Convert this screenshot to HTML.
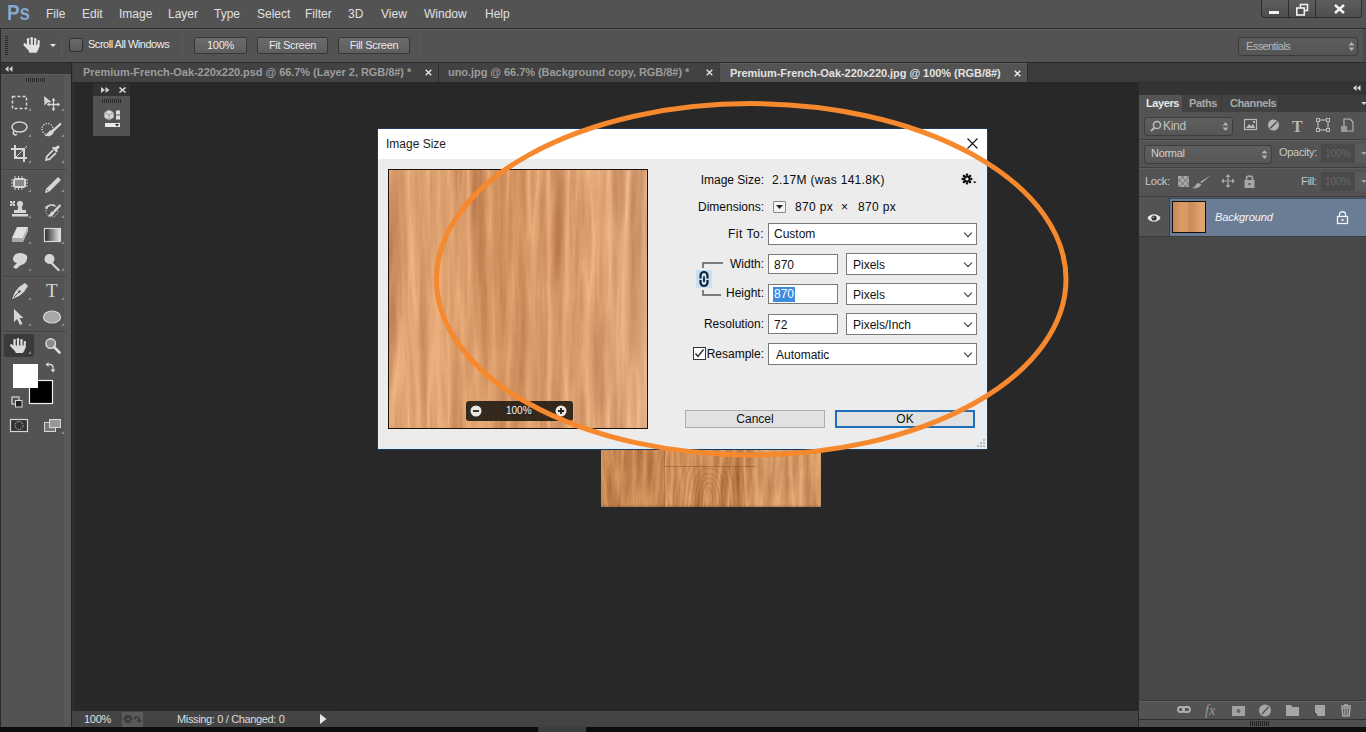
<!DOCTYPE html>
<html><head><meta charset="utf-8">
<style>
*{margin:0;padding:0;box-sizing:border-box}
html,body{width:1366px;height:732px;overflow:hidden;background:#282828;font-family:"Liberation Sans",sans-serif;}
.a{position:absolute}
svg{position:absolute;overflow:visible}
#menubar{left:0;top:0;width:1366px;height:28px;background:#535353;}
.mi{position:absolute;top:7px;font-size:12px;color:#e0e0e0;}
#mline{left:0;top:28px;width:1366px;height:1px;background:#2a2a2a}
#opts{left:0;top:29px;width:1366px;height:33px;background:#535353;}
.btn{position:absolute;top:8px;height:17px;border:1px solid #363636;border-radius:2px;background:linear-gradient(#6b6b6b,#5d5d5d);color:#e8e8e8;font-size:11px;text-align:center;line-height:15px;letter-spacing:-0.3px}
.sep{position:absolute;width:1px;background:#454545;border-right:1px solid #5c5c5c}
#tabbar{left:72px;top:62px;width:1294px;height:20px;background:#3c3c3c;border-top:1px solid #2a2a2a}
.tab{position:absolute;top:0;height:19px;font-size:11px;font-weight:bold;color:#9c9c9c;padding-left:10px;line-height:18px;white-space:nowrap;letter-spacing:-0.05px}
.tab .x{position:absolute;top:0;font-weight:normal;font-size:12px;color:#cfcfcf}
#lefttb{left:0;top:62px;width:72px;height:665px;background:linear-gradient(90deg,#535353 64px,#585858 64px 71px,#232323 71px);}
#lefthdr{left:0;top:62px;width:71px;height:13px;background:#363636;border-top:1px solid #2a2a2a;border-bottom:1px solid #5c5c5c}
#canvas{left:72px;top:82px;width:1067px;height:629px;background:#282828;}
#status{left:72px;top:711px;width:1067px;height:16px;background:#444444;}
#bottom{left:0;top:727px;width:1366px;height:5px;background:#0c0c0c}
#rightp{left:1138px;top:81px;width:228px;height:646px;background:#484848;border-left:1px solid #2a2a2a}
#dlg{left:377px;top:128px;width:611px;height:322px;background:#ececec;border:1px solid #1f3a58;}
#dtitle{left:0;top:0;width:609px;height:30px;background:#fff;}
.lbl{position:absolute;font-size:12px;color:#0a0a0a;white-space:nowrap}
.inp{position:absolute;background:#fff;border:1px solid #7a7a7a;font-size:12px;color:#111;padding-left:5px}
.dd{position:absolute;background:#fff;border:1px solid #7a7a7a;font-size:12px;color:#111;padding-left:6px}
.dd:after{content:"";position:absolute;right:5px;top:6px;width:5px;height:5px;border-right:1.2px solid #333;border-bottom:1.2px solid #333;transform:rotate(45deg)}
.ti{position:absolute}
.wood1{background:linear-gradient(90deg,rgba(245,185,135,0) 0.0px, rgba(245,185,135,0.48) 2.6px, rgba(245,185,135,0) 5.2px,rgba(245,185,135,0) 5.2px, rgba(245,185,135,0.38) 7.8px, rgba(245,185,135,0) 10.4px,rgba(245,185,135,0) 10.4px, rgba(245,185,135,0.39) 12.1px, rgba(245,185,135,0) 13.7px,rgba(150,90,45,0) 13.7px, rgba(150,90,45,0.36) 17.5px, rgba(150,90,45,0) 21.3px,rgba(150,90,45,0) 23.9px, rgba(150,90,45,0.59) 27.3px, rgba(150,90,45,0) 30.8px,rgba(150,90,45,0) 39.5px, rgba(150,90,45,0.26) 42.7px, rgba(150,90,45,0) 45.8px,rgba(150,90,45,0) 45.8px, rgba(150,90,45,0.32) 48.7px, rgba(150,90,45,0) 51.5px,rgba(150,90,45,0) 51.5px, rgba(150,90,45,0.41) 53.4px, rgba(150,90,45,0) 55.2px,rgba(150,90,45,0) 71.4px, rgba(150,90,45,0.60) 74.0px, rgba(150,90,45,0) 76.6px,rgba(245,185,135,0) 85.6px, rgba(245,185,135,0.27) 89.1px, rgba(245,185,135,0) 92.6px,rgba(150,90,45,0) 92.6px, rgba(150,90,45,0.52) 94.6px, rgba(150,90,45,0) 96.6px,rgba(150,90,45,0) 106.1px, rgba(150,90,45,0.32) 110.1px, rgba(150,90,45,0) 114.0px,rgba(245,185,135,0) 114.0px, rgba(245,185,135,0.49) 118.2px, rgba(245,185,135,0) 122.4px,rgba(150,90,45,0) 122.4px, rgba(150,90,45,0.47) 124.8px, rgba(150,90,45,0) 127.2px,rgba(150,90,45,0) 127.2px, rgba(150,90,45,0.28) 130.9px, rgba(150,90,45,0) 134.6px,rgba(150,90,45,0) 138.9px, rgba(150,90,45,0.34) 142.6px, rgba(150,90,45,0) 146.3px,rgba(150,90,45,0) 146.3px, rgba(150,90,45,0.53) 147.6px, rgba(150,90,45,0) 149.0px,rgba(245,185,135,0) 149.0px, rgba(245,185,135,0.33) 150.6px, rgba(245,185,135,0) 152.2px,rgba(245,185,135,0) 158.5px, rgba(245,185,135,0.26) 159.9px, rgba(245,185,135,0) 161.3px,rgba(245,185,135,0) 165.2px, rgba(245,185,135,0.47) 169.0px, rgba(245,185,135,0) 172.8px,rgba(245,185,135,0) 172.8px, rgba(245,185,135,0.46) 174.5px, rgba(245,185,135,0) 176.3px,rgba(150,90,45,0) 176.3px, rgba(150,90,45,0.60) 179.5px, rgba(150,90,45,0) 182.8px,rgba(150,90,45,0) 182.8px, rgba(150,90,45,0.52) 184.5px, rgba(150,90,45,0) 186.2px,rgba(150,90,45,0) 186.2px, rgba(150,90,45,0.28) 188.4px, rgba(150,90,45,0) 190.5px,rgba(245,185,135,0) 190.5px, rgba(245,185,135,0.27) 191.9px, rgba(245,185,135,0) 193.2px,rgba(245,185,135,0) 193.2px, rgba(245,185,135,0.34) 196.3px, rgba(245,185,135,0) 199.4px,rgba(245,185,135,0) 199.4px, rgba(245,185,135,0.37) 203.7px, rgba(245,185,135,0) 208.1px,rgba(150,90,45,0) 208.1px, rgba(150,90,45,0.30) 212.1px, rgba(150,90,45,0) 216.2px,rgba(150,90,45,0) 224.5px, rgba(150,90,45,0.51) 226.4px, rgba(150,90,45,0) 228.3px,rgba(150,90,45,0) 228.3px, rgba(150,90,45,0.58) 232.6px, rgba(150,90,45,0) 236.9px,rgba(150,90,45,0) 245.0px, rgba(150,90,45,0.26) 247.5px, rgba(150,90,45,0) 250.0px,rgba(150,90,45,0) 250.0px, rgba(150,90,45,0.50) 254.4px, rgba(150,90,45,0) 258.7px),linear-gradient(90deg, rgba(170,105,55,0) 0px, rgba(160,100,50,0.25) 15px, rgba(170,105,55,0) 30px, rgba(170,105,55,0) 60px, rgba(170,105,55,0.15) 110px, rgba(150,95,50,0.3) 150px, rgba(170,105,55,0.1) 180px, rgba(250,190,140,0.15) 220px, rgba(250,190,140,0.3) 255px),linear-gradient(180deg,#d69860,#dc9f68 50%,#e0a36c);}
.wood2{background:linear-gradient(90deg,rgba(150,90,50,0.3) 0,rgba(150,90,50,0) 8px,rgba(150,90,50,0) 14px,rgba(150,90,50,0.25) 17px,rgba(250,200,150,0.2) 28px),#d99a63;}
.w3a{background:linear-gradient(90deg,rgba(235,170,115,0) 3.2px, rgba(235,170,115,0.26) 6.4px, rgba(235,170,115,0) 9.6px,rgba(235,170,115,0) 17.1px, rgba(235,170,115,0.27) 19.9px, rgba(235,170,115,0) 22.7px,rgba(235,170,115,0) 22.7px, rgba(235,170,115,0.38) 23.7px, rgba(235,170,115,0) 24.8px,rgba(120,70,35,0) 27.2px, rgba(120,70,35,0.26) 29.1px, rgba(120,70,35,0) 30.9px,rgba(235,170,115,0) 48.0px, rgba(235,170,115,0.35) 49.1px, rgba(235,170,115,0) 50.2px,rgba(120,70,35,0) 53.0px, rgba(120,70,35,0.54) 55.3px, rgba(120,70,35,0) 57.6px,rgba(235,170,115,0) 60.5px, rgba(235,170,115,0.30) 63.1px, rgba(235,170,115,0) 65.7px),#c2824f} .w3b{background:linear-gradient(90deg,rgba(140,85,45,0) 0.0px, rgba(140,85,45,0.26) 4.4px, rgba(140,85,45,0) 8.7px,rgba(140,85,45,0) 8.7px, rgba(140,85,45,0.29) 13.2px, rgba(140,85,45,0) 17.7px,rgba(245,190,140,0) 17.7px, rgba(245,190,140,0.47) 21.0px, rgba(245,190,140,0) 24.3px,rgba(245,190,140,0) 51.4px, rgba(245,190,140,0.26) 54.5px, rgba(245,190,140,0) 57.6px,rgba(245,190,140,0) 57.6px, rgba(245,190,140,0.48) 61.5px, rgba(245,190,140,0) 65.5px,rgba(140,85,45,0) 78.9px, rgba(140,85,45,0.58) 82.0px, rgba(140,85,45,0) 85.2px),#d49660} .w3c{background:linear-gradient(90deg,rgba(140,85,45,0) 8.5px, rgba(140,85,45,0.46) 12.6px, rgba(140,85,45,0) 16.7px,rgba(250,200,150,0) 16.7px, rgba(250,200,150,0.24) 19.2px, rgba(250,200,150,0) 21.7px,rgba(250,200,150,0) 21.7px, rgba(250,200,150,0.27) 23.4px, rgba(250,200,150,0) 25.0px,rgba(140,85,45,0) 25.0px, rgba(140,85,45,0.28) 27.6px, rgba(140,85,45,0) 30.2px,rgba(250,200,150,0) 30.2px, rgba(250,200,150,0.35) 33.7px, rgba(250,200,150,0) 37.2px,rgba(250,200,150,0) 37.2px, rgba(250,200,150,0.22) 40.8px, rgba(250,200,150,0) 44.3px,rgba(250,200,150,0) 44.3px, rgba(250,200,150,0.40) 48.1px, rgba(250,200,150,0) 51.8px,rgba(250,200,150,0) 62.7px, rgba(250,200,150,0.40) 65.0px, rgba(250,200,150,0) 67.3px),#dba06c}

</style></head><body>
<div id="menubar" class="a">
  <div class="a" style="left:7px;top:0px;font-size:22px;font-weight:bold;color:#86a8cc;transform:scaleX(0.86);transform-origin:0 0;line-height:25px">Ps</div>
  <span class="mi" style="left:46px">File</span>
  <span class="mi" style="left:82px">Edit</span>
  <span class="mi" style="left:119px">Image</span>
  <span class="mi" style="left:168px">Layer</span>
  <span class="mi" style="left:214px">Type</span>
  <span class="mi" style="left:257px">Select</span>
  <span class="mi" style="left:305px">Filter</span>
  <span class="mi" style="left:348px">3D</span>
  <span class="mi" style="left:381px">View</span>
  <span class="mi" style="left:424px">Window</span>
  <span class="mi" style="left:485px">Help</span>
  <!-- window controls -->
  <div class="a" style="left:1261px;top:-1px;width:101px;height:19px;border:1px solid #2e2e2e;border-top:none;border-radius:0 0 4px 4px;background:linear-gradient(#5e5e5e,#4e4e4e)"></div>
  <div class="a" style="left:1288px;top:0;width:1px;height:18px;background:#2e2e2e"></div>
  <div class="a" style="left:1315px;top:0;width:1px;height:18px;background:#2e2e2e"></div>
  <div class="a" style="left:1269px;top:11px;width:10px;height:3px;background:#f2f2f2"></div>
  <svg style="left:1296px;top:4px" width="13" height="12"><rect x="4.5" y="0.5" width="7" height="6" fill="none" stroke="#f2f2f2" stroke-width="1.6"/><rect x="0.8" y="4" width="7.5" height="7" fill="#4f4f4f" stroke="#f2f2f2" stroke-width="1.6"/></svg>
  <svg style="left:1334px;top:4px" width="11" height="10"><path d="M1 1L10 9M10 1L1 9" stroke="#f4f4f4" stroke-width="2.4"/></svg>
</div>
<div id="mline" class="a"></div>
<div id="opts" class="a">
  <div class="a" style="left:0;top:0;width:1366px;height:1px;background:#5d5d5d"></div>
  <!-- grip -->
  <div class="a" style="left:5px;top:7px;width:3px;height:19px;background:repeating-linear-gradient(#2d2d2d 0 1px,transparent 1px 2px)"></div>
  <!-- hand -->
  <svg style="left:23px;top:7px" width="18" height="18" viewBox="0 0 18 18"><g stroke="#e2e2e2" stroke-linecap="round" fill="none"><path d="M1.8 8.5L5.5 12.5" stroke-width="2.6"/><path d="M5.2 3.2V10" stroke-width="2.5"/><path d="M8.7 2.2V10" stroke-width="2.5"/><path d="M12.2 3.2V10" stroke-width="2.5"/><path d="M15.6 5.3L15 11" stroke-width="2.5"/></g><path d="M4 9H16.6L15.2 14L13.5 16.8H6.5L4.8 13Z" fill="#e2e2e2"/><path d="M6.9 3.5V8M10.4 3.5V8M13.9 5V8.5" stroke="#3a3a3a" stroke-width="0.7"/></svg>
  <div class="a" style="left:50px;top:15px;width:0;height:0;border-left:3px solid transparent;border-right:3px solid transparent;border-top:3px solid #e8e8e8"></div>
  <div class="sep" style="left:61px;top:7px;height:20px"></div>
  <div class="a" style="left:69px;top:9px;width:14px;height:14px;border:1px solid #2f2f2f;border-radius:2px;background:linear-gradient(#6a6a6a,#5a5a5a)"></div>
  <div class="a" style="left:88px;top:9px;font-size:11px;color:#ececec;letter-spacing:-0.48px">Scroll All Windows</div>
  <div class="sep" style="left:182px;top:5px;height:24px"></div>
  <div class="btn" style="left:194px;width:53px">100%</div>
  <div class="btn" style="left:257px;width:71px">Fit Screen</div>
  <div class="btn" style="left:338px;width:72px">Fill Screen</div>
  <div class="sep" style="left:420px;top:5px;height:24px"></div>
  <!-- essentials -->
  <div class="a" style="left:1238px;top:8px;width:120px;height:19px;border:1px solid #3b3b3b;border-radius:3px;background:linear-gradient(#5c5c5c,#555)"></div>
  <div class="a" style="left:1246px;top:11px;font-size:11px;color:#b9b9b9;letter-spacing:-0.6px">Essentials</div>
  <svg style="left:1348px;top:12px" width="7" height="11"><path d="M0.5 4.5L3.5 1L6.5 4.5ZM0.5 6.5L3.5 10L6.5 6.5Z" fill="#b0b0b0"/></svg>
  <div class="a" style="left:1363px;top:0;width:3px;height:33px;background:#4a4a4a"></div>
</div>
<div id="tabbar" class="a">
  <div class="tab" style="left:1px;width:365px;background:#424242;padding-left:10px">Premium-French-Oak-220x220.psd @ 66.7% (Layer 2, RGB/8#) *<svg style="left:351.5px;top:6px" width="7" height="7"><path d="M0.7 0.7L6.3 6.3M6.3 0.7L0.7 6.3" stroke="#e6e6e6" stroke-width="1.35"/></svg></div>
  <div class="a" style="left:366px;top:1px;width:1px;height:18px;background:#2e2e2e"></div>
  <div class="tab" style="left:367px;width:280px;background:#424242;padding-left:9px">uno.jpg @ 66.7% (Background copy, RGB/8#) *<svg style="left:266.5px;top:6px" width="7" height="7"><path d="M0.7 0.7L6.3 6.3M6.3 0.7L0.7 6.3" stroke="#e6e6e6" stroke-width="1.35"/></svg></div>
  <div class="tab" style="left:648px;width:307px;background:#535353;color:#e2e2e2;padding-left:10px;border-top:1px solid #5e5e5e">Premium-French-Oak-220x220.jpg @ 100% (RGB/8#)<svg style="left:293.5px;top:6px" width="7" height="7"><path d="M0.7 0.7L6.3 6.3M6.3 0.7L0.7 6.3" stroke="#eeeeee" stroke-width="1.35"/></svg></div>
  <div class="a" style="left:955px;top:1px;width:1px;height:18px;background:#2e2e2e"></div>
</div>
</div>
<div id="canvas" class="a"></div>
<div class="a" style="left:72px;top:82px;width:2px;height:629px;background:#2f2f2f"></div>
<div id="status" class="a"></div>
<div id="bottom" class="a"></div>
<div class="a" style="left:84px;top:713px;font-size:11px;color:#e0e0e0;letter-spacing:-0.3px">100%</div>
<div class="a" style="left:122px;top:712px;width:21px;height:15px;background:#5a5a5a"></div>
<svg style="left:123px;top:714px" width="20" height="11"><circle cx="5" cy="5" r="2.4" fill="none" stroke="#3a3a3a" stroke-width="1.8"/><rect x="7.70" y="4.10" width="1.8" height="1.8" fill="#3a3a3a"/><rect x="6.65" y="6.65" width="1.8" height="1.8" fill="#3a3a3a"/><rect x="4.10" y="7.70" width="1.8" height="1.8" fill="#3a3a3a"/><rect x="1.55" y="6.65" width="1.8" height="1.8" fill="#3a3a3a"/><rect x="0.50" y="4.10" width="1.8" height="1.8" fill="#3a3a3a"/><rect x="1.55" y="1.55" width="1.8" height="1.8" fill="#3a3a3a"/><rect x="4.10" y="0.50" width="1.8" height="1.8" fill="#3a3a3a"/><rect x="6.65" y="1.55" width="1.8" height="1.8" fill="#3a3a3a"/><path d="M11 4.5C12 2.5 15 2.5 16 4.5V7M14 6L16 8L18 6" fill="none" stroke="#3a3a3a" stroke-width="1.5"/><path d="M10.5 4L12.5 2V6Z" fill="#3a3a3a"/></svg>
<div class="a" style="left:177px;top:713px;font-size:11px;color:#dcdcdc;letter-spacing:-0.35px">Missing: 0 / Changed: 0</div>
<svg style="left:320px;top:714px" width="7" height="10"><path d="M0 0L6.5 5L0 10Z" fill="#e8e8e8"/></svg>
<div class="a" style="left:330px;top:711px;width:809px;height:16px;background:linear-gradient(#464646,#424242)"></div>
<div class="a" style="left:538px;top:727px;width:48px;height:5px;background:#3a3d40"></div>


<div id="lefttb" class="a"></div>
<div id="lefthdr" class="a"></div>
<div class="a" style="left:0;top:29px;width:1px;height:698px;background:#2a2a2a"></div>
<svg style="left:5px;top:66px" width="8" height="6"><path d="M0 3L3.5 0V6ZM4 3L7.5 0V6Z" fill="#cfcfcf"/></svg>
<div class="a" style="left:26px;top:78px;width:20px;height:4px;background:repeating-linear-gradient(90deg,#2a2a2a 0 1px,transparent 1px 2px)"></div>
<div class="a" style="left:3px;top:169px;width:63px;height:1px;background:#434343"></div><div class="a" style="left:3px;top:170px;width:63px;height:1px;background:#5a5a5a"></div>
<div class="a" style="left:3px;top:276px;width:63px;height:1px;background:#434343"></div><div class="a" style="left:3px;top:277px;width:63px;height:1px;background:#5a5a5a"></div>
<div class="a" style="left:3px;top:331px;width:63px;height:1px;background:#434343"></div><div class="a" style="left:3px;top:332px;width:63px;height:1px;background:#5a5a5a"></div>
<div class="a" style="left:4px;top:334px;width:30px;height:23px;background:#3a3a3a;border-radius:2px"></div>
<svg style="left:0;top:0" width="72" height="440" viewBox="0 0 72 440">
 <g fill="none" stroke="#d6d6d6" stroke-width="1.5">
  <!-- marquee -->
  <rect x="12.5" y="96.5" width="14" height="12" stroke-dasharray="3 2"/>
  <!-- lasso -->
  <ellipse cx="19.5" cy="127" rx="7.5" ry="5"/>
  <path d="M14 131 C12 134 15 136 17 134"/>
  <!-- crop -->
  <path d="M15 145V158H27M11 149H24V162" stroke-width="2"/>
  <path d="M15 158L27 146" stroke-width="1"/>
  <!-- quick selection dotted circle -->
  <circle cx="47.5" cy="129" r="5.5" stroke-dasharray="1.2 1.4"/>
  <!-- history brush arc -->
  <path d="M46 209 C47 205 52 204 55 206" stroke-width="1.6"/>
  <circle cx="52" cy="211" r="6" stroke-dasharray="1.2 1.4" stroke-width="1"/>
  <!-- pen -->
  <!-- ellipse tool -->
 </g>
 <g fill="#d6d6d6">
  <!-- move tool -->
  <path d="M44 96L44.5 105.5L47.5 102.5L51.5 102Z"/>
  <path d="M47.5 104.5H59.5M53.5 98.5V110.5" stroke="#d6d6d6" stroke-width="1.3"/>
  <path d="M47 104.5L49.5 102.5V106.5ZM60 104.5L57.5 102.5V106.5ZM53.5 98L51.5 100.5H55.5ZM53.5 111L51.5 108.5H55.5Z"/>
  <!-- quick selection brush -->
  <path d="M60.5 122.5L52.5 129.5C51 131 52 133 53.5 132L61.5 124.5Z"/>
  <path d="M51 130C48 131 47.5 134.5 44.5 135.5C48.5 137.5 53.5 135.5 53.5 132Z"/>
  <!-- eyedropper -->
  <path d="M57 146C58.5 144.5 60.5 146.5 59 148L57 150L58 151L56.5 152.5L52 148L53.5 146.5L54.5 147.5Z"/>
  <path d="M52.5 149.5L46 156L45 161L50 160L56.5 153.5L55.3 152.3L49.3 158.3L47.3 158.7L47.7 156.7L53.7 150.7Z"/>
  <!-- spot healing -->
  <rect x="13" y="178" width="13" height="10" rx="3"/>
  <path d="M11 180H28M11 183H28M11 186H28M15 176V190M18.5 176V190M22 176V190" stroke="#d6d6d6" stroke-width="0.9"/>
  <rect x="15" y="180" width="9" height="6" fill="#8a8a8a"/>
  <!-- brush/pencil -->
  <path d="M58 177L61 180L49 192L45 193L46 189Z"/>
  <path d="M47 190L48.5 191.5" stroke="#535353"/>
  <!-- stamp -->
  <circle cx="20" cy="204" r="3"/>
  <path d="M18.5 206H21.5L22.5 210H26V213H14V210H17.5Z"/>
  <rect x="12" y="214" width="16" height="2.5"/>
  <path d="M10 201h2v2h-2zM13 201h2v2h-2zM11.5 202.5h2v2h-2zM10 204h2v2h-2zM13 204h2v2h-2z"/>
  <!-- history brush -->
  <path d="M60 204L54 210C52.5 211.5 53.5 213.5 55 212.5L61 206Z"/>
  <path d="M52 211C50 213 50 215.5 47 216 C50 217 54 216 54.5 213Z"/>
  <path d="M45 207L48 205.5L47.5 209Z"/>
  <!-- eraser -->
  <path d="M17 227H28L23 238H12Z" fill="#e0e0e0"/>
  <path d="M12 238H23L23 242H12Z" fill="#a8a8a8"/>
  <path d="M23 238L28 227L28 231L23 242Z" fill="#bdbdbd"/>
  <!-- smudge finger -->
  <path d="M14 256C16 252 24 252 27 256C28 260 25 265 21 265L16 269L13 267L17 263C13 262 12 259 14 256Z"/>
  <!-- dodge -->
  <circle cx="49.5" cy="259" r="5"/>
  <path d="M52 262L60 270L58.5 271.5L50.5 263.5Z"/>
  <!-- pen -->
  <path d="M25 283L28 286L24 292L19 296L12 299L15 292L19 287Z"/>
  <path d="M14 297L19 292" stroke="#535353" stroke-width="1"/>
  <circle cx="19.5" cy="291.5" r="1.2" fill="#535353"/>
  <!-- type T -->
  <text x="46" y="297" font-family="Liberation Serif" font-size="19" fill="#d6d6d6">T</text>
  <!-- path selection -->
  <path d="M14 309V322L17 319L20 325L22.5 324L19.5 318L23.5 318Z"/>
  <!-- ellipse tool -->
  <ellipse cx="52" cy="317" rx="8.5" ry="6" fill="#a8a8a8" stroke="#d6d6d6" stroke-width="1.2"/>
  <!-- hand tool -->
  <g transform="translate(9.5,337) scale(0.98)"><g stroke="#dcdcdc" stroke-linecap="round" fill="none"><path d="M1.8 8.5L5.5 12.5" stroke-width="2.6"/><path d="M5.2 3.2V10" stroke-width="2.5"/><path d="M8.7 2.2V10" stroke-width="2.5"/><path d="M12.2 3.2V10" stroke-width="2.5"/><path d="M15.6 5.3L15 11" stroke-width="2.5"/></g><path d="M4 9H16.6L15.2 14L13.5 16.3H6.5L4.8 13Z" fill="#dcdcdc"/><path d="M6.9 3.5V8M10.4 3.5V8M13.9 5V8.5" stroke="#333" stroke-width="0.7"/></g>
  <!-- zoom -->
  <circle cx="50.7" cy="343.6" r="4.8" fill="#8c8c8c" stroke="#dedede" stroke-width="1.4"/>
  <path d="M54 347L59.5 352.5" stroke="#dedede" stroke-width="2.6" stroke-linecap="round"/>
  <!-- swap arrow -->
  <path d="M48 364.5H50C52.5 364.5 53 366 53 368V370" stroke="#d6d6d6" stroke-width="1.3" fill="none"/>
  <path d="M45.5 364.5L48.5 362V367Z"/>
  <path d="M50.5 369.5H55.5L53 372.5Z"/>
  <!-- default colors -->
  <rect x="12" y="397" width="7" height="7" fill="none" stroke="#d6d6d6" stroke-width="1.2"/>
  <rect x="15.5" y="400.5" width="6.5" height="6.5" fill="#222" stroke="#d6d6d6" stroke-width="1"/>
  <!-- quick mask -->
  <rect x="10.5" y="419.5" width="17" height="12" fill="#333" stroke="#d6d6d6" stroke-width="1.2"/>
  <circle cx="19" cy="425.5" r="4" fill="none" stroke="#d6d6d6" stroke-width="1" stroke-dasharray="1 1"/>
  <!-- screen mode -->
  <rect x="44.5" y="422.5" width="11" height="9" fill="#777" stroke="#d6d6d6" stroke-width="1"/>
  <rect x="49.5" y="419.5" width="11" height="8" fill="#999" stroke="#d6d6d6" stroke-width="1"/>
 </g>
 <g fill="#8c8c8c">
  <path d="M28 111h3v-3zM61 111h3v-3zM28 137h3v-3zM61 137h3v-3zM28 163h3v-3zM61 163h3v-3zM28 192h3v-3zM61 192h3v-3zM28 218h3v-3zM61 218h3v-3zM28 244h3v-3zM61 244h3v-3zM28 271h3v-3zM61 271h3v-3zM28 300h3v-3zM61 300h3v-3zM28 326h3v-3zM61 326h3v-3zM28 354h3v-3zM61 434h3v-3z"/>
 </g>
 <!-- gradient tool -->
 <defs><linearGradient id="gg" x1="0" x2="1"><stop offset="0" stop-color="#222"/><stop offset="1" stop-color="#eee"/></linearGradient></defs>
 <rect x="44.5" y="228.5" width="16" height="13" fill="url(#gg)" stroke="#d6d6d6" stroke-width="1.2"/>
 <!-- swatches -->
 <rect x="29.5" y="380.5" width="23" height="23" fill="#000" stroke="#f0f0f0" stroke-width="1.2"/>
 <rect x="13" y="364" width="25" height="24" fill="#fff"/>
</svg>
<!-- floating panel -->
<div class="a" style="left:93px;top:83px;width:37px;height:13px;background:#323232"></div>
<div class="a" style="left:93px;top:96px;width:37px;height:40px;background:#535353"></div>
<svg style="left:101px;top:87px" width="9" height="6"><path d="M0 0L4 3L0 6ZM4.5 0L8.5 3L4.5 6Z" fill="#d0d0d0"/></svg>
<svg style="left:119px;top:87px" width="7" height="6"><path d="M0.5 0.5L6.5 5.5M6.5 0.5L0.5 5.5" stroke="#e0e0e0" stroke-width="1.6"/></svg>
<div class="a" style="left:102px;top:99px;width:19px;height:4px;background:repeating-linear-gradient(90deg,#2a2a2a 0 1px,transparent 1px 2px)"></div>
<svg style="left:104px;top:109px" width="18" height="20"><path d="M5 1L9.5 3.5V8.5L5 11L0.5 8.5V3.5Z" fill="#d8d8d8" stroke="#aaa" stroke-width="0.6"/><path d="M5 6V11M0.5 3.5L5 6L9.5 3.5" stroke="#888" stroke-width="0.8" fill="none"/><rect x="12" y="1.5" width="4" height="4" fill="#e0e0e0"/><rect x="12" y="6.5" width="4" height="4" fill="#e0e0e0"/><rect x="1" y="14" width="15" height="4" fill="#e8e8e8"/><path d="M11 15H15L13 17.5Z" fill="#222"/></svg>


<div id="rightp" class="a"></div>
<div class="a" style="left:1139px;top:81px;width:227px;height:14px;background:#343434"></div>
<svg style="left:1353px;top:85px" width="8" height="6"><path d="M3.5 0V6L0 3ZM7.5 0V6L4 3Z" fill="#d8d8d8"/></svg>
<div class="a" style="left:1139px;top:95px;width:227px;height:17px;background:#3d3d3d"></div>
<div class="a" style="left:1139px;top:95px;width:43px;height:17px;background:#535353;font-size:11px;font-weight:bold;color:#e8e8e8;padding-left:7px;line-height:17px;letter-spacing:-0.4px">Layers</div>
<div class="a" style="left:1182px;top:95px;width:40px;height:17px;background:#424242;border-right:1px solid #363636;font-size:11px;font-weight:bold;color:#a9a9a9;padding-left:7px;line-height:17px;letter-spacing:-0.4px">Paths</div>
<div class="a" style="left:1222px;top:95px;width:57px;height:17px;background:#424242;border-right:1px solid #363636;font-size:11px;font-weight:bold;color:#a9a9a9;padding-left:8px;line-height:17px;letter-spacing:-0.4px">Channels</div>
<svg style="left:1361px;top:102px" width="6" height="4"><path d="M0 0H6L3 3Z" fill="#d0d0d0"/></svg>
<div class="a" style="left:1139px;top:112px;width:227px;height:85px;background:#535353"></div>
<div class="a" style="left:1139px;top:139px;width:227px;height:1px;background:#3f3f3f"></div>
<div class="a" style="left:1139px;top:140px;width:227px;height:1px;background:#5e5e5e"></div>
<div class="a" style="left:1139px;top:167px;width:227px;height:1px;background:#3f3f3f"></div>
<div class="a" style="left:1139px;top:168px;width:227px;height:1px;background:#5e5e5e"></div>
<div class="a" style="left:1139px;top:196px;width:227px;height:1px;background:#3f3f3f"></div>
<!-- kind -->
<div class="a" style="left:1144px;top:117px;width:89px;height:19px;border:1px solid #3e3e3e;border-radius:3px;background:linear-gradient(#5f5f5f,#565656)"></div>
<svg style="left:1150px;top:120px" width="12" height="12"><circle cx="7" cy="5" r="3.6" fill="none" stroke="#bdbdbd" stroke-width="1.5"/><path d="M4.5 7.5L1 11" stroke="#bdbdbd" stroke-width="1.8"/></svg>
<div class="a" style="left:1163px;top:119px;font-size:12px;color:#c0c0c0;letter-spacing:-0.3px">Kind</div>
<svg style="left:1222px;top:121px" width="7" height="11"><path d="M0.5 4.5L3.5 1L6.5 4.5ZM0.5 6.5L3.5 10L6.5 6.5Z" fill="#b0b0b0"/></svg>
<svg style="left:1243px;top:117px" width="120" height="20">
 <rect x="1.5" y="2.5" width="12" height="10" fill="none" stroke="#b8b8b8" stroke-width="1.2"/><path d="M3 11L6 7L8 9L10 7L12 11Z" fill="#b8b8b8"/><rect x="10" y="4" width="2" height="2" fill="#b8b8b8"/>
 <circle cx="30.5" cy="8" r="5.5" fill="#b5b5b5"/><path d="M27 11.5L34 4.5" stroke="#535353" stroke-width="1.5"/>
 <text x="49" y="15" font-family="Liberation Serif" font-weight="bold" font-size="16" fill="#b8b8b8">T</text>
 <rect x="75" y="3" width="10" height="10" fill="none" stroke="#b8b8b8" stroke-width="1.2"/><rect x="73.5" y="1.5" width="3" height="3" fill="#535353" stroke="#b8b8b8" stroke-width="1"/><rect x="83.5" y="1.5" width="3" height="3" fill="#535353" stroke="#b8b8b8" stroke-width="1"/><rect x="73.5" y="11.5" width="3" height="3" fill="#535353" stroke="#b8b8b8" stroke-width="1"/><rect x="83.5" y="11.5" width="3" height="3" fill="#535353" stroke="#b8b8b8" stroke-width="1"/>
 <path d="M101 2H107L110 5V14H101Z" fill="none" stroke="#b8b8b8" stroke-width="1.1"/><rect x="98" y="9" width="6" height="6" fill="#9a9a9a"/>
</svg>
<!-- normal -->
<div class="a" style="left:1144px;top:145px;width:128px;height:19px;border:1px solid #3e3e3e;border-radius:3px;background:linear-gradient(#5f5f5f,#565656)"></div>
<div class="a" style="left:1151px;top:147px;font-size:11px;color:#cfcfcf;letter-spacing:-0.3px">Normal</div>
<svg style="left:1261px;top:149px" width="7" height="11"><path d="M0.5 4.5L3.5 1L6.5 4.5ZM0.5 6.5L3.5 10L6.5 6.5Z" fill="#b0b0b0"/></svg>
<div class="a" style="left:1279px;top:146px;font-size:11px;color:#c8c8c8;letter-spacing:-0.3px">Opacity:</div>
<div class="a" style="left:1321px;top:144px;width:34px;height:19px;background:#4a4a4a;font-size:10px;color:#666;padding-left:4px;line-height:19px">100%</div>
<div class="a" style="left:1355px;top:144px;width:11px;height:19px;background:#5a5a5a"></div>
<svg style="left:1361px;top:152px" width="6" height="4"><path d="M0 0H6L3 3Z" fill="#a0a0a0"/></svg>
<!-- lock -->
<div class="a" style="left:1145px;top:175px;font-size:11px;color:#c8c8c8;letter-spacing:-0.3px">Lock:</div>
<svg style="left:1177px;top:173px" width="85" height="16">
 <rect x="1" y="3" width="11" height="11" fill="#888"/><path d="M1 3h3v3h-3zM7 3h3v3h-3zM4 6h3v3h-3zM10 6h2v3h-2zM1 9h3v3h-3zM7 9h3v3h-3zM4 12h3v2h-3zM10 12h2v2h-2z" fill="#a8a8a8"/>
 <path d="M34 2L25 10L23 9ZM21 10C18 11 19 14 15 15C20 16 24 14 24 11Z" fill="#a8a8a8"/>
 <path d="M51 2V14M45 8H57" stroke="#a8a8a8" stroke-width="1.2"/><path d="M51 1L48.5 4H53.5ZM51 15L48.5 12H53.5ZM44 8L47 5.5V10.5ZM58 8L55 5.5V10.5Z" fill="#a8a8a8"/>
 <path d="M69.5 7V5C69.5 2.5 75.5 2.5 75.5 5V7" fill="none" stroke="#a8a8a8" stroke-width="1.6"/><rect x="67.5" y="7" width="10" height="8" fill="#a8a8a8"/><rect x="71.5" y="10" width="2" height="2" fill="#535353"/>
</svg>
<div class="a" style="left:1301px;top:175px;font-size:11px;color:#c8c8c8;letter-spacing:-0.3px">Fill:</div>
<div class="a" style="left:1321px;top:172px;width:34px;height:19px;background:#4a4a4a;font-size:10px;color:#666;padding-left:4px;line-height:19px">100%</div>
<div class="a" style="left:1355px;top:172px;width:11px;height:19px;background:#5a5a5a"></div>
<svg style="left:1361px;top:180px" width="6" height="4"><path d="M0 0H6L3 3Z" fill="#a0a0a0"/></svg>
<!-- layer row -->
<div class="a" style="left:1139px;top:197px;width:227px;height:40px;background:#535353;border-bottom:1px solid #3c3c3c"></div>
<div class="a" style="left:1169px;top:197px;width:1px;height:40px;background:#3c3c3c"></div>
<div class="a" style="left:1170px;top:198px;width:196px;height:38px;background:#6a7d95;border-top:1px solid #3b5170"></div>
<svg style="left:1147px;top:213px" width="14" height="10"><path d="M0.5 5C3 0 11 0 13.5 5C11 10 3 10 0.5 5Z" fill="#e8e8e8"/><circle cx="7" cy="5" r="2.6" fill="#333"/><circle cx="6.3" cy="4.3" r="0.8" fill="#ddd"/></svg>
<div class="a wood2" style="left:1172px;top:201px;width:34px;height:32px;border:1px solid #111"></div>
<div class="a" style="left:1215px;top:211px;font-size:11px;font-style:italic;color:#f4f4f4;letter-spacing:-0.1px">Background</div>
<svg style="left:1336px;top:210px" width="13" height="14"><path d="M3.5 6V4C3.5 1 9.5 1 9.5 4V6" fill="none" stroke="#f0f0f0" stroke-width="1.3"/><rect x="1.5" y="6.5" width="10" height="7" fill="none" stroke="#f0f0f0" stroke-width="1.3"/><rect x="5.5" y="9" width="2" height="2" fill="#f0f0f0"/></svg>
<!-- footer -->
<div class="a" style="left:1139px;top:700px;width:227px;height:1px;background:#3a3a3a"></div>
<div class="a" style="left:1139px;top:701px;width:227px;height:18px;background:#535353;border-top:1px solid #626262"></div>
<div class="a" style="left:1139px;top:719px;width:227px;height:1px;background:#2f2f2f"></div>
<div class="a" style="left:1139px;top:720px;width:227px;height:7px;background:#4f4f4f"></div>
<div class="a" style="left:1250px;top:721px;width:19px;height:5px;background:repeating-linear-gradient(90deg,#222 0 1px,transparent 1px 2px)"></div>
<svg style="left:1170px;top:702px" width="190" height="16">
 <g fill="none" stroke="#b0b0b0" stroke-width="1.8"><rect x="8" y="5" width="6" height="5" rx="2.5"/><rect x="13" y="5" width="7" height="5" rx="2.5"/></g>
 <text x="35" y="13" font-family="Liberation Serif" font-style="italic" font-size="14" fill="#9a9a9a">fx</text>
 <rect x="62" y="4" width="13" height="10" fill="#a2a2a2"/><circle cx="68.5" cy="9" r="2" fill="#666"/>
 <circle cx="95" cy="8.5" r="6" fill="#a6a6a6"/><path d="M92 12L98.5 5" stroke="#555" stroke-width="1.4"/>
 <path d="M116 3H121L122.5 5H129V14H116Z" fill="#a6a6a6"/>
 <rect x="145" y="3" width="10" height="11" fill="#a6a6a6"/><path d="M144 10V14.5H148.5Z" fill="#535353"/><path d="M144.5 10.5L147 13" stroke="#333" stroke-width="1"/>
 <path d="M171 4H181M174 3H178" stroke="#a8a8a8" stroke-width="1.5"/><path d="M172 6H180L179 14H173Z" fill="none" stroke="#a8a8a8" stroke-width="1.5"/><path d="M174.5 7V13M176 7V13M177.5 7V13" stroke="#a8a8a8" stroke-width="0.8"/>
</svg>


<!-- wood image below dialog -->
<div class="a" style="left:601px;top:449px;width:220px;height:58px;overflow:hidden;background:#c98c57">
<svg style="left:0;top:0" width="220" height="58"><defs>
<filter id="wf3" x="0" y="0" width="100%" height="100%" color-interpolation-filters="sRGB">
<feTurbulence type="turbulence" baseFrequency="0.09 0.01" numOctaves="3" seed="3"/>
<feColorMatrix type="matrix" values="-0.35 0 0 0 0.90  -0.38 0 0 0 0.66  -0.33 0 0 0 0.44  0 0 0 0 1"/>
</filter>
</defs>
<rect width="220" height="58" filter="url(#wf3)"/>
<rect x="0" y="0" width="63" height="58" fill="#9a5a28" fill-opacity="0.16"/>
<rect x="155" y="0" width="65" height="58" fill="#ffe0b0" fill-opacity="0.18"/>
<clipPath id="cp3"><rect x="64" y="18" width="91" height="40"/></clipPath><g clip-path="url(#cp3)"><g transform="translate(63,24)" fill="none" stroke="#8a4e20" stroke-opacity="0.28" stroke-width="1"><path d="M40.2 45 C40.2 31.0 41.7 14.8 45 14.8 C48.3 14.8 49.8 31.0 49.8 45"/><path d="M37.0 45 C37.0 25.0 39.5 10.0 45 10.0 C50.5 10.0 53.0 25.0 53.0 45"/><path d="M33.8 45 C33.8 19.0 37.3 5.2 45 5.2 C52.7 5.2 56.2 19.0 56.2 45"/><path d="M30.6 45 C30.6 13.0 35.1 0.4 45 0.4 C54.9 0.4 59.4 13.0 59.4 45"/><path d="M27.4 45 C27.4 7.0 32.9 -4.4 45 -4.4 C57.1 -4.4 62.6 7.0 62.6 45"/><path d="M23.4 45 C23.4 -0.5 30.1 -10.4 45 -10.4 C59.9 -10.4 66.6 -0.5 66.6 45"/><path d="M19.4 45 C19.4 -8.0 27.4 -16.4 45 -16.4 C62.6 -16.4 70.6 -8.0 70.6 45"/><path d="M14.6 45 C14.6 -17.0 24.1 -23.6 45 -23.6 C65.9 -23.6 75.4 -17.0 75.4 45"/><path d="M9.0 45 C9.0 -27.5 20.2 -32.0 45 -32.0 C69.8 -32.0 81.0 -27.5 81.0 45"/></g></g>
<path d="M63.5 0V58M63 17.5H155" stroke="#6a3a18" stroke-opacity="0.35" stroke-width="1"/>
<rect x="0" y="56" width="220" height="2" fill="#4a2a10" fill-opacity="0.15"/>
</svg>
</div>
<div id="dlg" class="a">
<div class="a" style="left:606px;top:30px;width:3px;height:290px;background:#e2eef8"></div><div class="a" style="left:0;top:318px;width:609px;height:2px;background:#e2eef8"></div>
  <div id="dtitle" class="a"></div>
<div class="lbl" style="left:8px;top:8px;line-height:14px;color:#222">Image Size</div>
<svg style="left:589px;top:9px" width="11" height="11"><path d="M0.5 0.5L10.5 10.5M10.5 0.5L0.5 10.5" stroke="#111" stroke-width="1.1"/></svg>
<div class="a" style="left:10px;top:40px;width:260px;height:260px;border:1px solid #1e1208;overflow:hidden">
<svg style="left:0;top:0" width="258" height="258"><defs>
<filter id="wf1" x="0" y="0" width="100%" height="100%" color-interpolation-filters="sRGB">
<feTurbulence type="turbulence" baseFrequency="0.05 0.004" numOctaves="4" seed="9"/>
<feColorMatrix type="matrix" values="-0.30 0 0 0 0.95  -0.34 0 0 0 0.71  -0.30 0 0 0 0.50  0 0 0 0 1"/>
</filter>
<linearGradient id="wg1" x1="0" x2="1"><stop offset="0" stop-color="#fff" stop-opacity="0.05"/><stop offset="0.45" stop-color="#8a5020" stop-opacity="0.10"/><stop offset="0.75" stop-color="#fff" stop-opacity="0.05"/><stop offset="1" stop-color="#fff" stop-opacity="0.15"/></linearGradient>
</defs>
<rect width="258" height="258" filter="url(#wf1)"/>
<rect width="258" height="258" fill="url(#wg1)"/>
</svg></div>
<div class="a" style="left:88px;top:272px;width:107px;height:20px;background:rgba(38,30,22,0.92);border-radius:3px"></div>
<div class="lbl" style="left:128px;top:275px;line-height:14px;font-size:10px;color:#f4f4f4">100%</div>
<svg style="left:91px;top:275px" width="100" height="14"><circle cx="7" cy="7" r="5.5" fill="#e8e8e8"/><path d="M4 7H10" stroke="#2a2016" stroke-width="1.8"/><circle cx="92" cy="7" r="5.5" fill="#e8e8e8"/><path d="M89 7H95M92 4V10" stroke="#2a2016" stroke-width="1.8"/></svg>
<div class="lbl" style="right:223px;top:44px;line-height:14px">Image Size:</div>
<div class="lbl" style="left:394px;top:44px;line-height:14px;letter-spacing:0.3px;">2.17M (was 141.8K)</div>
<svg style="left:583px;top:44px" width="18" height="14"><circle cx="6" cy="6" r="2.6" fill="none" stroke="#111" stroke-width="2"/><rect x="9.20" y="4.90" width="2.2" height="2.2" fill="#111"/><rect x="7.94" y="7.94" width="2.2" height="2.2" fill="#111"/><rect x="4.90" y="9.20" width="2.2" height="2.2" fill="#111"/><rect x="1.86" y="7.94" width="2.2" height="2.2" fill="#111"/><rect x="0.60" y="4.90" width="2.2" height="2.2" fill="#111"/><rect x="1.86" y="1.86" width="2.2" height="2.2" fill="#111"/><rect x="4.90" y="0.60" width="2.2" height="2.2" fill="#111"/><rect x="7.94" y="1.86" width="2.2" height="2.2" fill="#111"/><path d="M12 8.5H15.5L13.75 10.5Z" fill="#111"/></svg>
<div class="lbl" style="right:223px;top:71px;line-height:14px">Dimensions:</div>
<div class="a" style="left:395px;top:72px;width:13px;height:12px;border:1px solid #888;background:#f4f4f4;border-radius:1px"></div>
<svg style="left:398px;top:76px" width="8" height="5"><path d="M0 0H7L3.5 4Z" fill="#222"/></svg>
<div class="lbl" style="left:417px;top:71px;line-height:14px;letter-spacing:0.35px">870 px</div><div class="lbl" style="left:463px;top:71px;line-height:14px">×</div><div class="lbl" style="left:480px;top:71px;line-height:14px;letter-spacing:0.35px">870 px</div>
<div class="lbl" style="right:223px;top:98px;line-height:14px;letter-spacing:0.5px">Fit To:</div>
<div class="dd" style="left:390px;top:94px;width:209px;height:22px;"><span style="position:absolute;left:5px;top:3px">Custom</span></div>
<svg style="left:318px;top:133px" width="30" height="35"><path d="M7 6V1H27M7 28V33H25" fill="none" stroke="#7d7d7d" stroke-width="2"/><rect x="0" y="8" width="16" height="18" fill="#c6e0f8"/><g fill="none" stroke="#16222e" stroke-width="2.2"><path d="M4.5 16.5V13.5A3.5 3.5 0 0 1 11.5 13.5V16.5"/><path d="M4.5 18V20.5A3.5 3.5 0 0 0 11.5 20.5V18"/><path d="M8 14.5V20" stroke-width="1.8"/></g></svg>
<div class="lbl" style="right:223px;top:128px;line-height:14px">Width:</div>
<div class="inp" style="left:390px;top:125px;width:70px;height:20px;"><span style="position:absolute;left:5px;top:3px">870</span></div>
<div class="dd" style="left:468px;top:124px;width:131px;height:22px;"><span style="position:absolute;left:6px;top:4px">Pixels</span></div>
<div class="lbl" style="right:223px;top:157px;line-height:14px">Height:</div>
<div class="inp" style="left:390px;top:155px;width:70px;height:20px;"><span style="position:absolute;left:4px;top:2px;background:#3c8ce0;color:#fff;padding:0 1px;line-height:15px">870</span></div>
<div class="dd" style="left:468px;top:154px;width:131px;height:22px;"><span style="position:absolute;left:6px;top:4px">Pixels</span></div>
<div class="lbl" style="right:223px;top:188px;line-height:14px">Resolution:</div>
<div class="inp" style="left:390px;top:185px;width:70px;height:20px;"><span style="position:absolute;left:5px;top:3px">72</span></div>
<div class="dd" style="left:468px;top:184px;width:131px;height:22px;"><span style="position:absolute;left:6px;top:4px">Pixels/Inch</span></div>
<svg style="left:315px;top:218px" width="14" height="14"><rect x="0.5" y="0.5" width="12" height="12" fill="#fff" stroke="#333" stroke-width="1"/><path d="M2.5 6.5L5 9.5L10.5 2.5" fill="none" stroke="#222" stroke-width="1.3"/></svg>
<div class="lbl" style="right:223px;top:218px;line-height:14px">Resample:</div>
<div class="dd" style="left:390px;top:214px;width:209px;height:22px;"><span style="position:absolute;left:7px;top:4px">Automatic</span></div>
<div class="a" style="left:307px;top:281px;width:140px;height:18px;background:#e1e1e1;border:1px solid #adadad"><span style="position:absolute;left:0;right:0;top:1px;text-align:center;font-size:12px;color:#111">Cancel</span></div>
<div class="a" style="left:457px;top:281px;width:140px;height:18px;background:#e1e1e1;border:2px solid #1f6fb8"><span style="position:absolute;left:0;right:0;top:0px;text-align:center;font-size:12px;color:#111">OK</span></div>
<svg style="left:599px;top:309px" width="9" height="9"><path d="M6 1h2v2h-2zM3 4h2v2h-2zM6 4h2v2h-2zM0 7h2v2h-2zM3 7h2v2h-2zM6 7h2v2h-2z" fill="#b8b8b8"/></svg>
</div>

<svg style="left:0;top:0" width="1366" height="732"><ellipse cx="751.2" cy="279.3" rx="314.8" ry="175.7" fill="none" stroke="#f6882e" stroke-width="5"/></svg>
</body></html>
